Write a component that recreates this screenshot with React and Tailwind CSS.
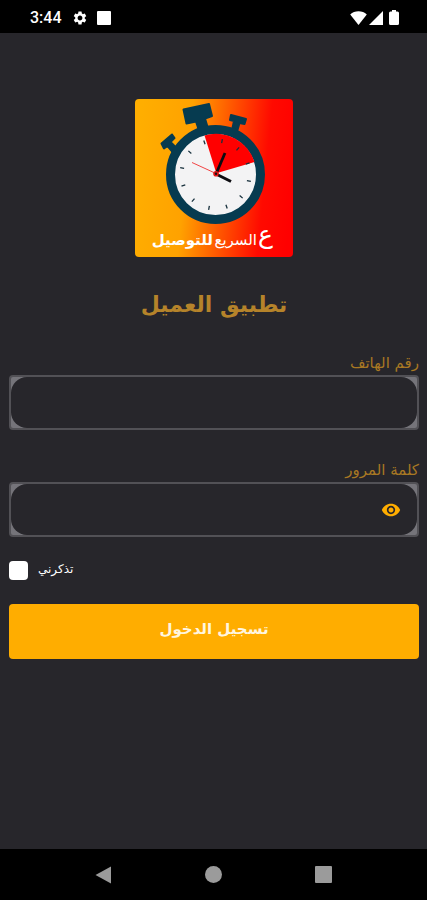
import React, { useState } from 'react';
import { MdSettings, MdRemoveRedEye } from 'react-icons/md';

const TICK_ANGLES = [11, 41, 71, 101, 131, 161, 191, 221, 251, 281, 311, 341];

const StatusBar = () => (
    <header className="flex h-[33px] shrink-0 items-center justify-between bg-black pl-[30px] pr-7 pt-0.5 text-white">
        <div className="flex items-center">
            <span className="font-['Roboto',sans-serif] text-base font-medium leading-5">3:44</span>
            <MdSettings size={16} className="ml-[10px]" />
            <span className="ml-[9px] size-3.5 rounded-[1px] bg-white" />
        </div>
        <div className="flex items-center gap-0.5">
            <svg width="17" height="14" viewBox="0 0 17 14" fill="currentColor">
                <path d="M8.500 14 0.200 3.600C4.500-.800 12.500-.800 16.800 3.600Z" />
            </svg>
            <svg width="14" height="14" viewBox="0 0 14 14" fill="currentColor">
                <path d="M14 0v14H0Z" />
            </svg>
            <svg width="10" height="15" viewBox="0 0 10 15" fill="currentColor" className="ml-1">
                <path d="M3 0h4v1.500h1.500Q10 1.500 10 3v10.500q0 1.500-1.500 1.500h-7Q0 15 0 13.500V3q0-1.500 1.500-1.500H3Z" />
            </svg>
        </div>
    </header>
);

const Logo = () => (
    <svg viewBox="0 0 158 158" className="size-[158px] rounded" role="img" aria-label="السريع للتوصيل">
        <defs>
            <linearGradient id="logo-bg" x1="0" y1="0.45" x2="1" y2="0.55">
                <stop offset="0" stopColor="#ffae00" />
                <stop offset="0.32" stopColor="#ffa200" />
                <stop offset="0.82" stopColor="#ff0a00" />
                <stop offset="1" stopColor="#ff0000" />
            </linearGradient>
        </defs>
        <rect width="158" height="158" fill="url(#logo-bg)" />

        {/* crown and side buttons */}
        <g fill="#063b50" stroke="#063b50" strokeWidth="2" strokeLinejoin="round">
            <path d="M48.500 10.500 74 5l3 12-7 2.500 3 10-9 2-3-9-9.500 2Z" />
            <path d="m96 16 15 4-1.500 5-5-1-2 7-5-2 1.500-7-4-1Z" />
            <path d="m26.500 44.500 10.500-9 2.500 3.500-4 4 7 7-4 4-6-7-3.500 2.500Z" />
        </g>

        <circle cx="80.500" cy="75.500" r="45" fill="#f3f3f4" stroke="#063b50" strokeWidth="9" />
        <path d="M81.300 74.300 69.500 36.500A40.500 40.500 0 0 1 119.500 63Z" fill="#ff0000" />
        <g stroke="#17303c" strokeWidth="1.300">
            {TICK_ANGLES.map((angle) => (
                <path key={angle} d="M80.500 39.500v4" transform={`rotate(${angle} 80.500 75.500)`} />
            ))}
        </g>
        <path d="m57 63.500 24 11" stroke="#f01818" strokeWidth="0.800" />
        <path d="m81 75 9-21" stroke="#0c0c10" strokeWidth="2.800" />
        <path d="m81 75 15 7.500" stroke="#0c0c10" strokeWidth="3" />
        <circle cx="81" cy="74.800" r="2.800" fill="#e01414" />
        <circle cx="81" cy="74.800" r="1.200" fill="#200c10" />

        <g fill="#fff" direction="rtl" className="font-['DejaVu_Sans',sans-serif]">
            <text x="138" y="144" fontSize="25">ع</text>
            <text x="122" y="146" fontSize="15">السريع</text>
            <text x="78" y="146" fontSize="15" fontWeight="700">للتوصيل</text>
        </g>
    </svg>
);

const Field = ({ id, label, type, className, children }) => (
    <div className={className}>
        <label htmlFor={id} className="block text-[15px] leading-6 text-[#a87823]">{label}</label>
        <div className="relative rounded border-2 border-[#525156] bg-[#75747a]">
            <input
                id={id}
                type={type}
                className="block h-[51px] w-full rounded-2xl bg-[#27262b] px-4 text-base text-white outline-none"
            />
            {children}
        </div>
    </div>
);

const App = () => {
    const [visible, setVisible] = useState(false);

    return (
        <div dir="rtl" className="flex min-h-screen flex-col bg-[#27262b] font-['DejaVu_Sans',sans-serif]">
            <div dir="ltr">
                <StatusBar />
            </div>

            <main className="flex-1 pl-[9px] pr-2 pt-[66px]">
                <div className="flex flex-col items-center">
                    <Logo />
                    <h1 className="mt-8 text-[22px] font-bold leading-8 text-[#b5832a]">تطبيق العميل</h1>
                </div>

                <form onSubmit={(e) => e.preventDefault()}>
                    <Field id="phone" label="رقم الهاتف" type="tel" className="mt-[30px]" />
                    <Field id="password" label="كلمة المرور" type={visible ? 'text' : 'password'} className="mt-7">
                        <button
                            type="button"
                            aria-label="إظهار كلمة المرور"
                            onClick={() => setVisible(!visible)}
                            className="absolute inset-y-0 right-4 flex items-center text-[#ffad00]"
                        >
                            <MdRemoveRedEye size={20} />
                        </button>
                    </Field>

                    <div dir="ltr" className="mt-6 flex items-start gap-2.5">
                        <input
                            id="remember"
                            type="checkbox"
                            className="size-[19px] appearance-none rounded-sm bg-white checked:bg-[#ffad00]"
                        />
                        <label htmlFor="remember" className="text-xs leading-4 text-white">تذكرني</label>
                    </div>

                    <button
                        type="submit"
                        className="mt-6 h-[55px] w-full rounded bg-[#ffad00] pb-1 text-[15px] font-bold text-[#fff6e0]"
                    >
                        تسجيل الدخول
                    </button>
                </form>
            </main>

            <nav dir="ltr" className="flex h-[51px] shrink-0 items-center justify-center gap-[93px] bg-black text-[#9b9b9b]">
                <button type="button" aria-label="رجوع">
                    <svg width="17" height="18" viewBox="0 0 17 18" fill="currentColor">
                        <path d="M16 0.500v17L0.500 9Z" />
                    </svg>
                </button>
                <button type="button" aria-label="الرئيسية" className="size-[17px] rounded-full bg-[#9b9b9b]" />
                <button type="button" aria-label="التطبيقات" className="size-[17px] rounded-[1px] bg-[#9b9b9b]" />
            </nav>
        </div>
    );
};

export default App;
